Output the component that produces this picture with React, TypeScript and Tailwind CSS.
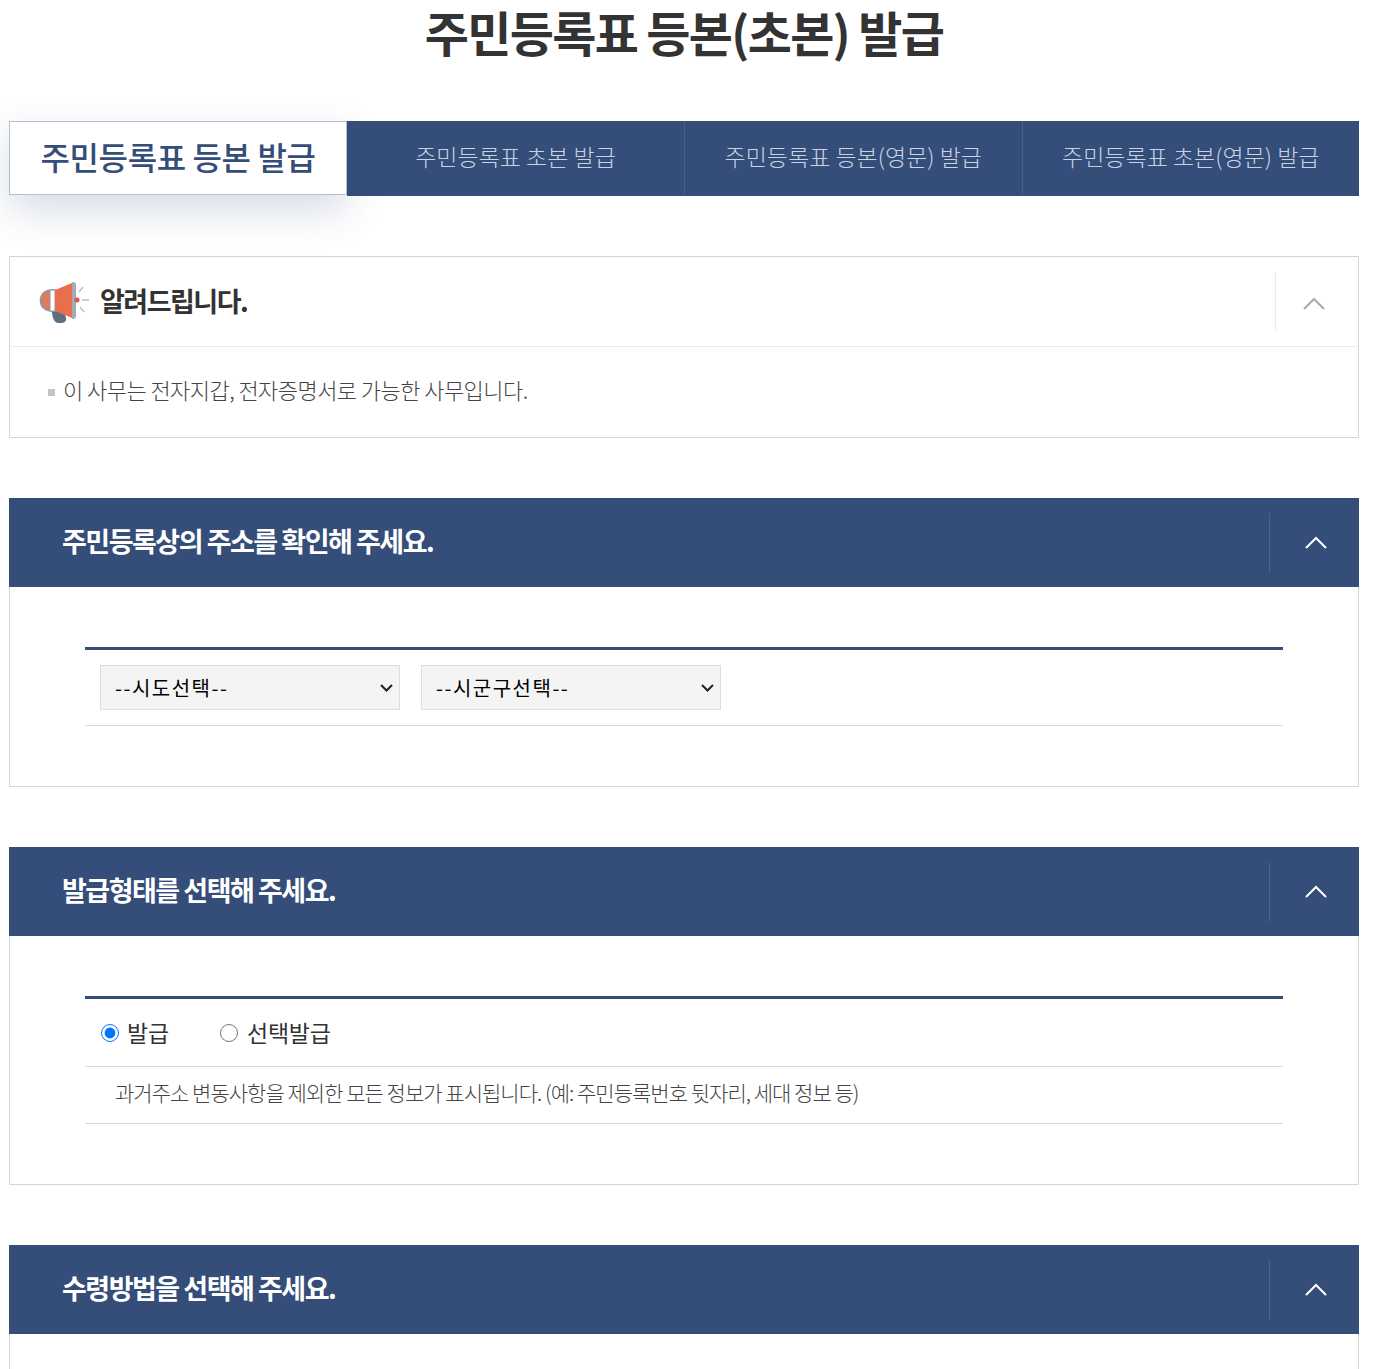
const tabs = ['주민등록표 초본 발급', '주민등록표 등본(영문) 발급', '주민등록표 초본(영문) 발급']

function Megaphone() {
  return (
    <svg width="50" height="44" viewBox="0 0 50 44" className="shrink-0">
      <path d="M12 28h12l3 10c1 3-2 5-5 5h-2c-3 0-5-2-6-5z" fill="#5f6f80" />
      <path d="M13 10C5 10 1.5 15 1.5 20.5S5 31 13 31h3V10z" fill="#e07a5c" stroke="#8f99a8" strokeWidth="1.6" />
      <rect x="11" y="10" width="5" height="21" fill="#fff" stroke="#8f99a8" strokeWidth="1" />
      <path d="M16 10L33 3v35l-17-7z" fill="#e76f4c" />
      <path d="M33 2h1c2 0 3 1 3 3v31c0 2-1 3-3 3h-1z" fill="#a3abb9" />
      <circle cx="38" cy="20" r="2.5" fill="#d9583b" />
      <path d="M40 12l4-5M43 20h7M41 27l4 5" stroke="#b4bac4" strokeWidth="1.3" fill="none" />
    </svg>
  )
}

function Chevron({ className }: { className: string }) {
  return (
    <svg width="22" height="13" viewBox="0 0 22 13" className={className}>
      <path d="M1 12L11 2l10 10" fill="none" stroke="currentColor" strokeWidth="2" />
    </svg>
  )
}

function SectionHeader({ title }: { title: string }) {
  return (
    <div className="flex h-[89px] items-center bg-[#344d79]">
      <h2 className="flex-1 pb-[2px] pl-[53px] text-[27px] font-bold tracking-[-1.5px] text-white">{title}</h2>
      <div className="flex h-[60px] w-[90px] items-center justify-center border-l border-[#4a628c]">
        <Chevron className="ml-[2px] text-white" />
      </div>
    </div>
  )
}

function Select({ label }: { label: string }) {
  return (
    <div className="relative h-[45px] w-[300px]">
      <select className="h-full w-full appearance-none border border-[#dddddd] bg-[#f4f4f4] px-[14px] text-[20px] tracking-[1.5px] text-black">
        <option>{label}</option>
      </select>
      <svg width="13" height="8" viewBox="0 0 13 8" className="pointer-events-none absolute top-[19px] right-[7px] text-[#222222]">
        <path d="M1 1l5.5 5.5L12 1" fill="none" stroke="currentColor" strokeWidth="2" />
      </svg>
    </div>
  )
}

export default function App() {
  return (
    <div className="h-[1369px] overflow-hidden bg-white pl-[9px] font-['Noto_Sans_CJK_KR','Noto_Sans',sans-serif] text-[#333333]">
      <div className="w-[1350px]">
        <h1 className="h-[121px] pt-[1px] text-center text-[48px] leading-[60px] font-bold tracking-[-1.7px] text-[#333333]">
          주민등록표 등본(초본) 발급
        </h1>

        <div className="flex h-[75px]">
          <div className="flex h-[74px] w-[338px] items-center justify-center border border-[#b3bfd6] bg-white pb-[4px] text-[32px] font-medium tracking-[-0.4px] text-[#344d79] shadow-[0_15px_40px_rgba(52,77,121,0.2)]">
            주민등록표 등본 발급
          </div>
          {tabs.map((t, i) => (
            <div
              key={t}
              className={`flex items-center justify-center bg-[#344d79] pb-[4px] text-[23px] font-light text-[#c9d2e2] ${i > 0 ? 'w-[337.5px] border-l border-[#47608b]' : 'flex-1'}`}
            >
              {t}
            </div>
          ))}
        </div>

        <div className="mt-[60px] border border-[#d5d5d5]">
          <div className="flex h-[90px] items-center border-b border-[#ebebeb]">
            <div className="flex flex-1 items-center pl-[29px]">
              <Megaphone />
              <span className="ml-[11px] text-[27px] font-bold tracking-[-1.5px]">알려드립니다.</span>
            </div>
            <div className="flex h-[60px] w-[83px] items-center justify-center border-l border-[#ebebeb]">
              <Chevron className="mt-[4px] mr-[6px] text-[#a9a9a9]" />
            </div>
          </div>
          <div className="flex h-[90px] items-center pb-[6px] pl-[38px] text-[22px] font-light tracking-[-0.55px] text-[#444444]">
            <span className="mt-[6px] mr-[8px] h-[7px] w-[7px] bg-[#c4c4c4]" />
            이 사무는 전자지갑, 전자증명서로 가능한 사무입니다.
          </div>
        </div>

        <section className="mt-[60px]">
          <SectionHeader title="주민등록상의 주소를 확인해 주세요." />
          <div className="border-x border-b border-[#d5d5d5] px-[75px] py-[60px]">
            <div className="flex h-[79px] items-center gap-[21px] border-t-[3px] border-b border-[#344d79] border-b-[#d8d8d8] pl-[15px]">
              <Select label="--시도선택--" />
              <Select label="--시군구선택--" />
            </div>
          </div>
        </section>

        <section className="mt-[60px]">
          <SectionHeader title="발급형태를 선택해 주세요." />
          <div className="border-x border-b border-[#d5d5d5] px-[75px] py-[60px]">
            <div className="flex h-[71px] items-center border-t-[3px] border-b border-[#344d79] border-b-[#d8d8d8] pl-[16px] text-[23px] tracking-[-0.2px]">
              <label className="flex items-center">
                <input type="radio" name="kind" defaultChecked className="m-0 h-[18px] w-[18px]" />
                <span className="ml-[8px]">발급</span>
              </label>
              <label className="ml-[51px] flex items-center">
                <input type="radio" name="kind" className="m-0 h-[18px] w-[18px]" />
                <span className="ml-[9px]">선택발급</span>
              </label>
            </div>
            <div className="flex h-[57px] items-center border-b border-[#d8d8d8] pb-[4px] pl-[30px] text-[21px] font-light tracking-[-0.97px] text-[#444444]">
              과거주소 변동사항을 제외한 모든 정보가 표시됩니다. (예: 주민등록번호 뒷자리, 세대 정보 등)
            </div>
          </div>
        </section>

        <section className="mt-[60px]">
          <SectionHeader title="수령방법을 선택해 주세요." />
          <div className="h-[100px] border-x border-[#d5d5d5]" />
        </section>
      </div>
    </div>
  )
}
